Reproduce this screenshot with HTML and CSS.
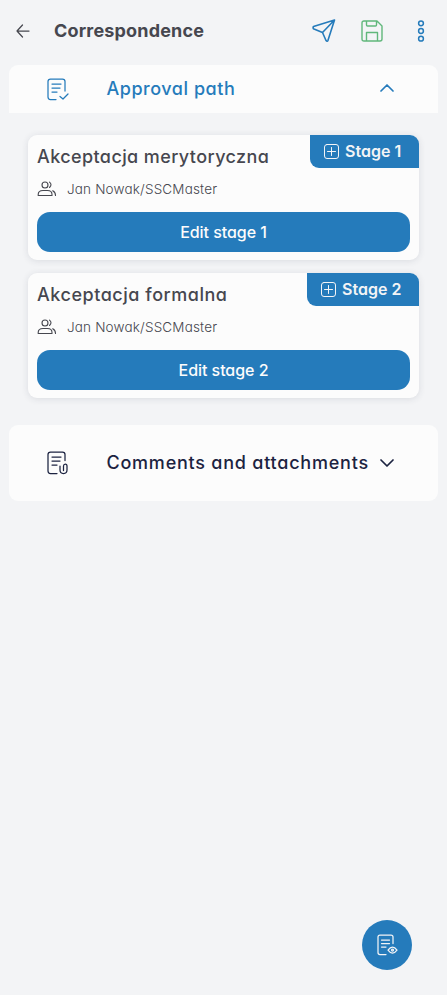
FILE: index.html
```html
<!DOCTYPE html>
<html lang="en">
<head>
<meta charset="utf-8">
<title>Correspondence</title>
<link rel="stylesheet" href="styles.css">
</head>
<body>
<header class="topbar">
  <svg class="back" width="14" height="14" viewBox="0 0 14 14"><path d="M13 7H1M6.500 1 1 7l5.500 6"/></svg>
  <h1><span class="t-title">Correspondence</span></h1>
  <nav class="actions">
    <svg class="send" width="24" height="24" viewBox="0 0 24 24"><path d="M22.500 1 1.500 7.500Q.5 9.200 2 10l8.500 3.500 3.500 8q1.200 1.500 2-.2L22.500 1 10.500 13.500"/></svg>
    <svg class="save" width="22" height="22" viewBox="0 0 22 22"><path d="M3 1h13l5 5v13q0 2-2 2H3q-2 0-2-2V3q0-2 2-2ZM5.500 1.500V5q0 1 1 1h8q1 0 1-1V1.500M5.500 20.500V12.500h11v8"/></svg>
    <svg class="more" width="8" height="22" viewBox="0 0 8 22"><circle cx="4" cy="3.300" r="2.400"/><circle cx="4" cy="11" r="2.400"/><circle cx="4" cy="18.700" r="2.400"/></svg>
  </nav>
</header>
<main>
  <section class="panel open">
    <svg class="doc" width="22" height="23" viewBox="0 0 22 23"><path d="M18 13V3.500q0-2.500-2.500-2.500h-12Q1 1 1 3.500V19q0 2.500 2.500 2.500H9M5 6h9M5 10h8M5 14h5M13 18.500l3 2.500 5-5"/></svg>
    <h2><span class="t-approval">Approval path</span></h2>
    <svg class="chev" width="14" height="8" viewBox="0 0 14 8"><path d="m1 7 6-6 6 6"/></svg>
  </section>
  <div class="stages">
    <article class="card">
      <div class="card-head">
        <h3><span class="t-name1">Akceptacja merytoryczna</span></h3>
        <div class="tag tag1"><svg width="15" height="15" viewBox="0 0 15 15"><rect x=".5" y=".5" width="14" height="14" rx="2.500"/><path d="M3.500 7.500h8M7.500 3.500v8"/></svg><span>Stage 1</span></div>
      </div>
      <div class="person">
        <svg width="20" height="16" viewBox="0 0 20 16"><circle cx="8" cy="4" r="3"/><path d="M1.200 14.500v-1q0-4 4.800-4h4.500q4.500 0 4.500 4v1ZM12.500 1.200q3 2.600 0 5.300M15.700 9.700q2.800 1.300 2.800 4.800"/></svg>
        <span class="t-person">Jan Nowak/SSCMaster</span>
      </div>
      <button><span>Edit stage 1</span></button>
    </article>
    <article class="card">
      <div class="card-head">
        <h3><span class="t-name2">Akceptacja formalna</span></h3>
        <div class="tag tag2"><svg width="15" height="15" viewBox="0 0 15 15"><rect x=".5" y=".5" width="14" height="14" rx="2.500"/><path d="M3.500 7.500h8M7.500 3.500v8"/></svg><span>Stage 2</span></div>
      </div>
      <div class="person">
        <svg width="20" height="16" viewBox="0 0 20 16"><circle cx="8" cy="4" r="3"/><path d="M1.200 14.500v-1q0-4 4.800-4h4.500q4.500 0 4.500 4v1ZM12.500 1.200q3 2.600 0 5.300M15.700 9.700q2.800 1.300 2.800 4.800"/></svg>
        <span class="t-person">Jan Nowak/SSCMaster</span>
      </div>
      <button><span>Edit stage 2</span></button>
    </article>
  </div>
  <section class="panel closed">
    <svg class="doc" width="22" height="24" viewBox="0 0 22 24"><path d="M18 9.500V3.500q0-2.500-2.500-2.500h-12Q1 1 1 3.500V20q0 2.500 2.500 2.500H10M5 6h9M5 10h8M5 14h5M13 15v4q0 3.500 3.500 3.500t3.500-3.500v-4q0-2-1.700-2t-1.800 2v4.500"/></svg>
    <h2><span class="t-comments">Comments and attachments</span></h2>
    <svg class="chev" width="14" height="8" viewBox="0 0 14 8"><path d="m1 1 6 6 6-6"/></svg>
  </section>
</main>
<button class="fab" aria-label="Preview"><svg width="21" height="22" viewBox="0 0 21 22"><path d="M16 9.500V3q0-2-2-2H3Q1 1 1 3v15.500q0 2 2 2h6M4.500 6h8M4.500 9.500h8M4.500 13H9M11 16q4.500-6 9 0-4.500 6-9 0Z"/><circle cx="15.500" cy="16" r="1"/></svg></button>
</body>
</html>
```

FILE: styles.css
```css
* { box-sizing: border-box; }
body {
  margin: 0;
  min-height: 995px;
  background: #f3f4f6;
  color: #46474f;
  font-family: Inter, "Open Sans", sans-serif;
  font-feature-settings: "cv11";
}
h1, h2, h3 { margin: 0; font-weight: 500; }
span { white-space: nowrap; }
svg { display: block; flex: none; fill: none; stroke: currentColor; stroke-width: 1.25; stroke-linecap: round; stroke-linejoin: round; }
.topbar { display: flex; align-items: center; height: 65px; padding: 0 22px 3px 16px; }
h1 { margin: -1px 0 0 24px; font-size: 18px; font-weight: 700; line-height: 27px; }
.actions { display: flex; align-items: center; margin-left: auto; color: #257bbb; }
.send { margin-right: 25px; stroke-width: 1.6; }
.save { margin-right: 34px; color: #60b77b; stroke-width: 1.4; }
.more { stroke-width: 1.5; }
.panel { display: flex; align-items: center; margin: 0 9px; padding: 0 44px 0 38px; background: #fcfcfc; color: #1c2341; }
.panel h2 { margin: -1px 0 0 37.500px; font-size: 18px; font-weight: 500; line-height: 27px; }
.panel .chev { margin: -2px 0 0 auto; stroke-width: 1.7; }
.panel.closed .chev { margin-top: 0; }
.open { height: 48px; border-radius: 9px 9px 0 0; color: #257bbb; }
.closed { height: 76px; border-radius: 9px; }
.stages { display: flex; flex-direction: column; gap: 13px; padding: 22px 28px 26.500px; }
.card { height: 125px; padding: 0 9px; border-radius: 9px; background: #fcfcfc; box-shadow: 0 1px 7px rgba(40, 50, 70, .12); }
.card-head { display: flex; height: 42px; justify-content: space-between; }
h3 { padding-top: 7.500px; font-size: 18px; font-weight: 450; line-height: 27px; }
.tag { display: flex; align-items: center; gap: 6px; height: 32.500px; margin-right: -9px; padding-left: 14px; background: #257bbb; color: #f3f4f6; border-radius: 0 9px; font-size: 16px; font-weight: 600; line-height: 18px; }
.tag span { margin-top: -1px; }
.tag1 { width: 109px; }
.tag2 { width: 112px; }
.tag svg { stroke-width: 1; }
.person { display: flex; align-items: center; gap: 10px; height: 23px; font-size: 13.500px; font-weight: 300; }
.person svg { stroke-width: 1.1; }
.card button { display: block; width: 100%; height: 39.500px; margin-top: 12px; padding: 0; border: 0; border-radius: 13px; background: #257bbb; color: #fcfcfc; font: 450 16px/24px Inter, "Open Sans", sans-serif; font-feature-settings: "cv11"; letter-spacing: -.05px; }
.t-title { letter-spacing: .17px; }
.t-approval { letter-spacing: .53px; }
.t-name1 { letter-spacing: .4px; }
.t-name2 { letter-spacing: .53px; }
.t-person { letter-spacing: .17px; }
.t-comments { letter-spacing: .77px; }
.fab { position: fixed; left: 362px; top: 920px; display: flex; align-items: center; justify-content: center; width: 50px; height: 50px; padding: 0; border: 0; border-radius: 50%; background: #257bbb; color: #f3f4f6; }
```
